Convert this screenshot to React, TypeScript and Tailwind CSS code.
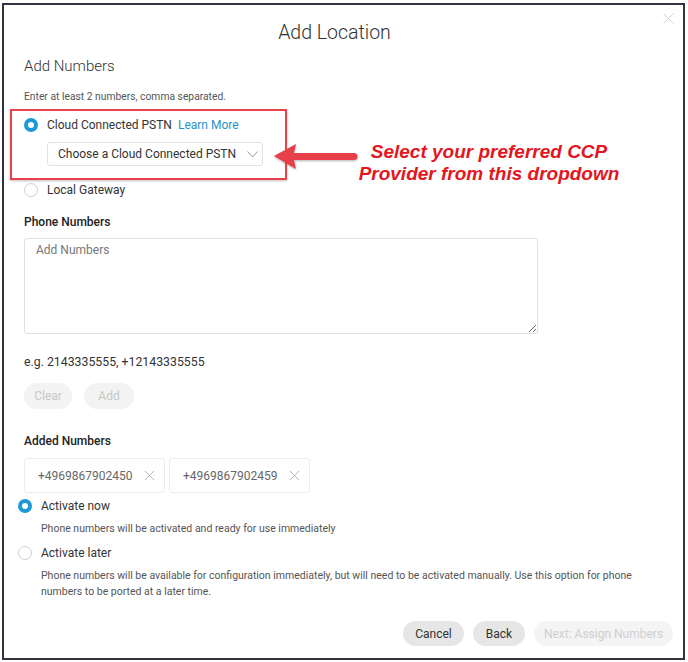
import React from "react";

const Radio = ({ checked }: { checked?: boolean }) =>
  checked ? (
    <span className="block w-[14px] h-[14px] rounded-full border-[4px] border-[#1d9ad6] bg-white shrink-0" />
  ) : (
    <span className="block w-[14px] h-[14px] rounded-full border border-[#d0d0d0] bg-white shrink-0" />
  );

const Chip = ({ value }: { value: string }) => (
  <div className="h-[35px] w-[141px] border border-[#ececec] rounded-[3px] flex items-center pl-[13px] pr-[10px] gap-[12px]">
    <span className="text-[12px] text-[#666]">{value}</span>
    <svg width="11" height="11" viewBox="0 0 11 11" className="shrink-0">
      <path d="M1 1L10 10M10 1L1 10" stroke="#b5b5b5" strokeWidth="1" />
    </svg>
  </div>
);

export default function App() {
  return (
    <div className="w-[688px] h-[662px] bg-white pt-[3px] pl-[2px] font-['Roboto','Liberation_Sans',sans-serif] text-[#333]">
      <div className="relative w-[683px] h-[657px] border-2 border-[#34343e] pl-[20px]">
        {/* close */}
        <svg width="11" height="11" viewBox="0 0 11 11" className="absolute right-[9px] top-[8px]">
          <path d="M0.5 0.5L10.5 10.5M10.5 0.5L0.5 10.5" stroke="#cfcfcf" strokeWidth="1" />
        </svg>

        <div className="h-[52px] pt-[4px] flex items-center justify-center pr-[38px] text-[19.5px] font-light text-[#333]">
          Add Location
        </div>
        <div className="h-[18px] flex items-center text-[15px] font-light">Add Numbers</div>
        <div className="mt-[14px] h-[16px] flex items-center text-[10.3px] text-[#555]">
          Enter at least 2 numbers, comma separated.
        </div>

        {/* highlighted option */}
        <div className="mt-[4px] -ml-[14px] w-[277px] h-[71px] border-2 border-[#e8434b] shadow-[0_1px_2px_rgba(0,0,0,0.25)] pl-[12px] pt-[5px]">
          <div className="h-[18px] flex items-center">
            <Radio checked />
            <span className="ml-[9px] text-[12px] text-[#333]">Cloud Connected PSTN</span>
            <span className="ml-[6px] text-[12px] text-[#2a8fc8]">Learn More</span>
          </div>
          <div className="mt-[8px] ml-[23px] w-[216px] h-[24px] border border-[#e2e2e2] rounded-[3px] flex items-center pl-[10px] pr-[4px] justify-between">
            <span className="text-[12px] text-[#333] whitespace-nowrap">Choose a Cloud Connected PSTN</span>
            <svg width="11" height="7" viewBox="0 0 11 7">
              <path d="M0.5 0.5L5.5 6L10.5 0.5" stroke="#999" strokeWidth="1" fill="none" />
            </svg>
          </div>
        </div>

        <div className="mt-[1px] h-[18px] flex items-center">
          <Radio />
          <span className="ml-[9px] text-[12px] text-[#333]">Local Gateway</span>
        </div>

        <div className="mt-[15px] h-[16px] flex items-center text-[12px] font-medium text-[#222]">Phone Numbers</div>
        <textarea
          readOnly
          placeholder="Add Numbers"
          className="mt-[8px] block w-[514px] h-[96px] border border-[#e0e0e0] rounded-[3px] px-[11px] py-[2px] text-[12px] placeholder:text-[#777] outline-none"
        />
        <div className="mt-[20px] h-[16px] flex items-center text-[12.3px] text-[#333]">e.g. 2143335555, +12143335555</div>

        <div className="mt-[13px] flex gap-[12px]">
          <div className="h-[26px] w-[48px] rounded-full bg-[#f3f3f3] flex items-center justify-center text-[12px] text-[#c8c8c8]">Clear</div>
          <div className="h-[26px] w-[50px] rounded-full bg-[#f3f3f3] flex items-center justify-center text-[12px] text-[#c8c8c8]">Add</div>
        </div>

        <div className="mt-[24px] h-[16px] flex items-center text-[12px] font-medium text-[#222]">Added Numbers</div>
        <div className="mt-[9px] flex gap-[4px]">
          <Chip value="+4969867902450" />
          <Chip value="+4969867902459" />
        </div>

        <div className="mt-[4px] -ml-[6px] h-[18px] flex items-center">
          <Radio checked />
          <span className="ml-[9px] text-[12px] text-[#333]">Activate now</span>
        </div>
        <div className="mt-[6px] ml-[17px] h-[16px] flex items-center text-[10.5px] text-[#555]">
          Phone numbers will be activated and ready for use immediately
        </div>
        <div className="mt-[7px] -ml-[6px] h-[18px] flex items-center">
          <Radio />
          <span className="ml-[9px] text-[12px] text-[#333]">Activate later</span>
        </div>
        <div className="mt-[6px] ml-[17px] w-[610px] text-[10.5px] leading-[16px] text-[#555]">
          Phone numbers will be available for configuration immediately, but will need to be activated manually. Use this option for phone numbers to be ported at a later time.
        </div>

        <div className="mt-[21px] flex justify-end gap-[9px] pr-[10px]">
          <div className="h-[25px] w-[61px] rounded-full bg-[#e6e6e6] flex items-center justify-center text-[12px] text-[#333]">Cancel</div>
          <div className="h-[25px] w-[52px] rounded-full bg-[#e6e6e6] flex items-center justify-center text-[12px] text-[#333]">Back</div>
          <div className="h-[25px] w-[139px] rounded-full bg-[#f4f4f4] flex items-center justify-center text-[12px] text-[#cfcfcf]">Next: Assign Numbers</div>
        </div>

        {/* annotation arrow */}
        <svg width="90" height="30" viewBox="0 0 90 30" className="absolute left-[266px] top-[136px] drop-shadow-[0_1px_1px_rgba(0,0,0,0.3)]">
          <path d="M4 15L26 3L24 12L84 12A3.5 3.5 0 0 1 84 19L24 19L26 28Z" fill="#e8404a" />
        </svg>
        <div className="absolute left-[350px] top-[136px] w-[270px] text-center font-['Liberation_Sans',Arial,sans-serif] italic font-bold text-[19px] leading-[22px] text-[#e3161e]">
          Select your preferred CCP
          <br />
          Provider from this dropdown
        </div>
      </div>
    </div>
  );
}
